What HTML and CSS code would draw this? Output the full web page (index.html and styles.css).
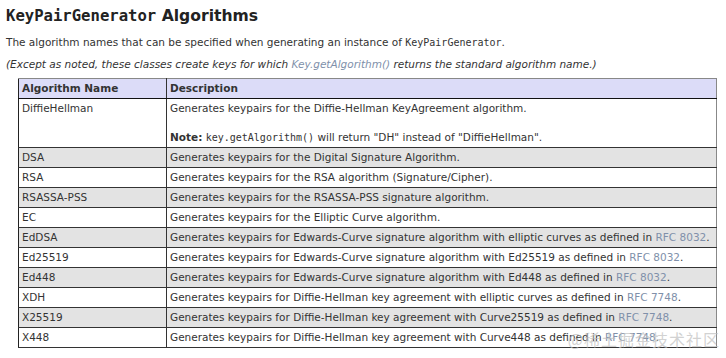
FILE: index.html
```html
<!DOCTYPE html>
<html>
<head>
<meta charset="utf-8">
<link rel="stylesheet" href="styles.css">
</head>
<body>
<h2 class="title"><code class="mono">KeyPairGenerator</code> Algorithms</h2>
<p class="intro">The algorithm names that can be specified when generating an instance of <code class="mono">KeyPairGenerator</code>.</p>
<p class="note-line"><em>(Except as noted, these classes create keys for which <a class="link">Key.getAlgorithm()</a> returns the standard algorithm name.)</em></p>
<table class="algos">
  <thead>
    <tr><th class="c1">Algorithm Name</th><th>Description</th></tr>
  </thead>
  <tbody>
    <tr class="odd"><td class="c1">DiffieHellman</td><td><p class="cellp">Generates keypairs for the Diffie-Hellman KeyAgreement algorithm.</p><p class="cellp gap"><strong>Note:</strong> <code class="mono">key.getAlgorithm()</code> will return "DH" instead of "DiffieHellman".</p></td></tr>
    <tr class="even"><td class="c1">DSA</td><td>Generates keypairs for the Digital Signature Algorithm.</td></tr>
    <tr class="odd"><td class="c1">RSA</td><td>Generates keypairs for the RSA algorithm (Signature/Cipher).</td></tr>
    <tr class="even"><td class="c1">RSASSA-PSS</td><td>Generates keypairs for the RSASSA-PSS signature algorithm.</td></tr>
    <tr class="odd"><td class="c1">EC</td><td>Generates keypairs for the Elliptic Curve algorithm.</td></tr>
    <tr class="even"><td class="c1">EdDSA</td><td>Generates keypairs for Edwards-Curve signature algorithm with elliptic curves as defined in <a class="link">RFC 8032</a>.</td></tr>
    <tr class="odd"><td class="c1">Ed25519</td><td>Generates keypairs for Edwards-Curve signature algorithm with Ed25519 as defined in <a class="link">RFC 8032</a>.</td></tr>
    <tr class="even"><td class="c1">Ed448</td><td>Generates keypairs for Edwards-Curve signature algorithm with Ed448 as defined in <a class="link">RFC 8032</a>.</td></tr>
    <tr class="odd"><td class="c1">XDH</td><td>Generates keypairs for Diffie-Hellman key agreement with elliptic curves as defined in <a class="link">RFC 7748</a>.</td></tr>
    <tr class="even"><td class="c1">X25519</td><td>Generates keypairs for Diffie-Hellman key agreement with Curve25519 as defined in <a class="link">RFC 7748</a>.</td></tr>
    <tr class="odd"><td class="c1">X448</td><td>Generates keypairs for Diffie-Hellman key agreement with Curve448 as defined in <a class="link">RFC 7748</a>.</td></tr>
  </tbody>
</table>
<div class="watermark">@稀土掘金技术社区</div>
</body>
</html>
```

FILE: styles.css
```css
html, body {
  margin: 0;
  padding: 0;
  background: #fff;
}
body {
  padding: 6px;
  font-family: "DejaVu Sans", Verdana, sans-serif;
  font-size: 10.5px;
  color: #333;
  position: relative;
  height: 358px;
  box-sizing: border-box;
  overflow: hidden;
}
.mono {
  font-family: "DejaVu Sans Mono", "Liberation Mono", monospace;
  font-size: 10px;
}
.title {
  margin: 0;
  font-size: 15.6px;
  line-height: 20px;
  font-weight: bold;
  color: #222;
}
.title .mono {
  font-size: 15.6px;
  font-weight: bold;
}
.intro {
  margin: 8px 0 0 0;
  line-height: 16px;
}
.note-line {
  margin: 5px 0 0 0;
  line-height: 16px;
}
.link {
  color: #8090aa;
  text-decoration: none;
}
.algos {
  margin: 6px 0 0 12px;
  border-collapse: collapse;
  width: 699px;
  border-top: 1px solid #888;
  border-right: 1px solid #888;
  border-left: 1px solid #222;
  border-bottom: 1px solid #222;
}
.algos th, .algos td {
  text-align: left;
  vertical-align: top;
  padding: 2px 3px;
  line-height: 15px;
  height: 15px;
  border-bottom: 1px solid #333;
  white-space: nowrap;
}
.algos th {
  background: #dcdcf8;
  font-weight: bold;
  border-bottom: 1px solid #111;
}
.algos .c1 {
  width: 141px;
  border-right: 1px solid #333;
}
.algos tr.even td {
  background: #e3e3e3;
}
.algos tr.odd td {
  background: #fff;
}
.cellp {
  margin: 0;
}
.cellp.gap {
  margin-top: 14px;
}
.watermark {
  position: absolute;
  right: 6px;
  top: 329px;
  white-space: nowrap;
  font-family: "Noto Sans CJK SC", sans-serif;
  font-size: 16px;
  line-height: 20px;
  color: rgba(190, 190, 190, 0.7);
  letter-spacing: 1px;
}
```
